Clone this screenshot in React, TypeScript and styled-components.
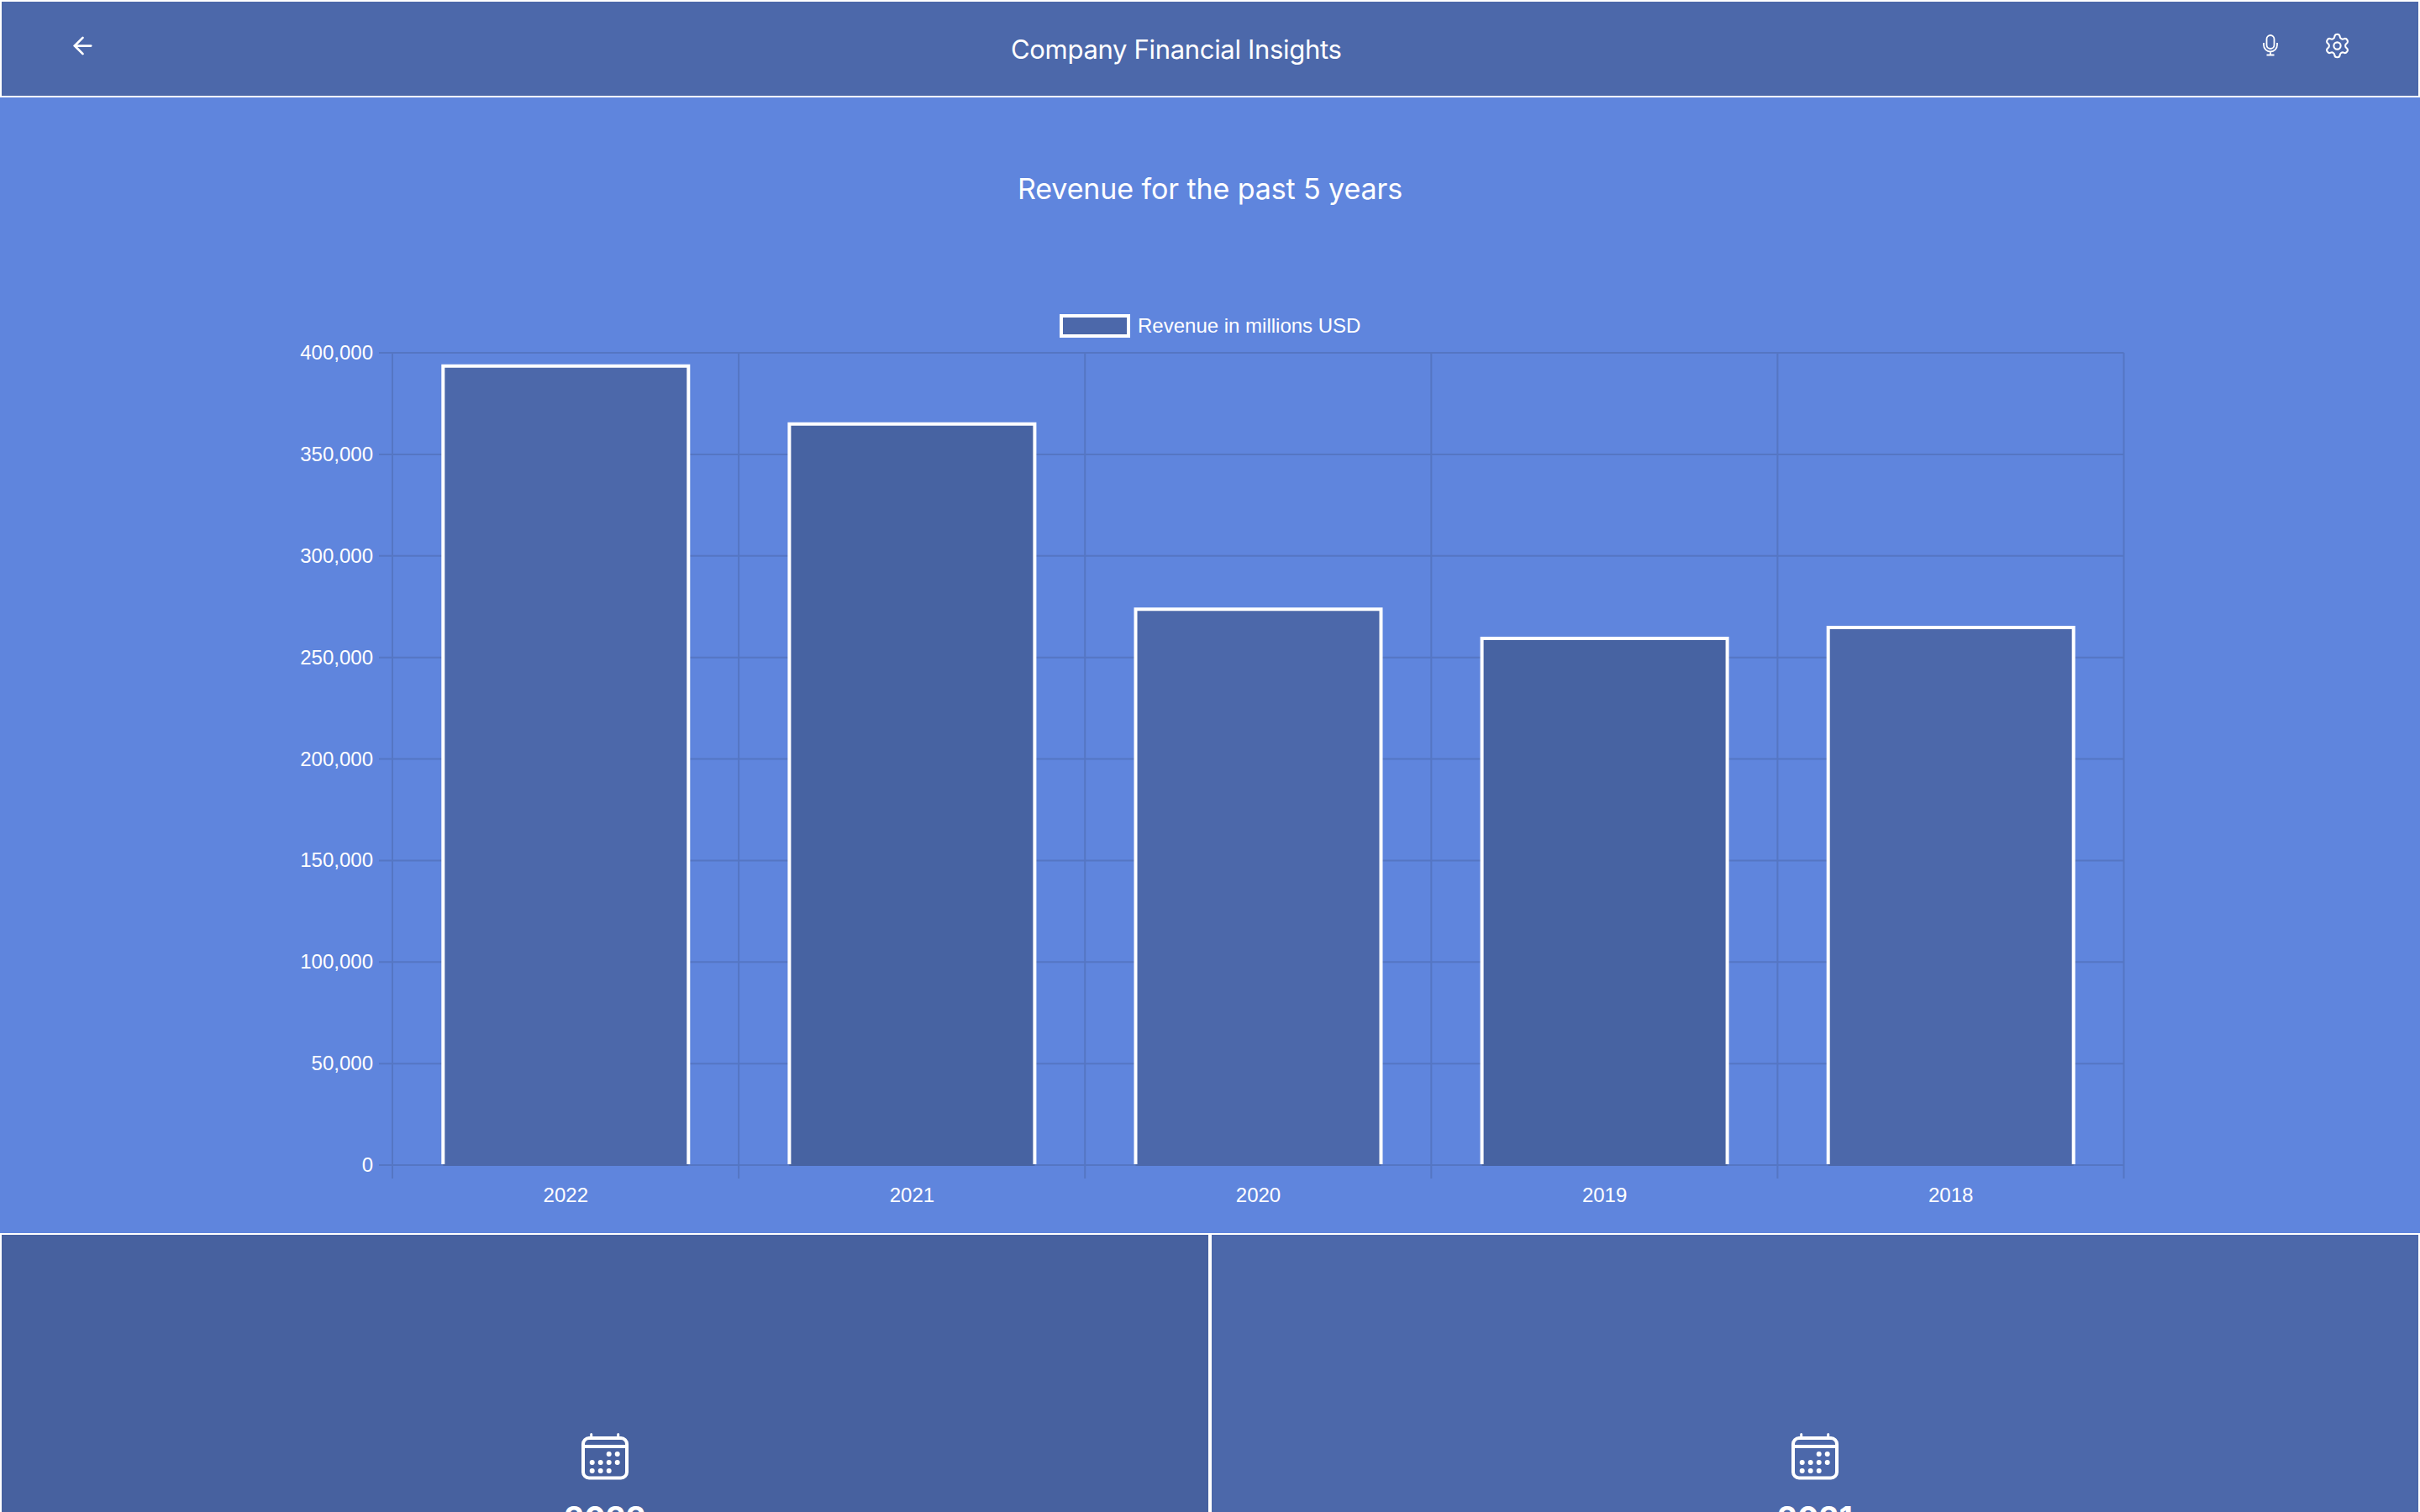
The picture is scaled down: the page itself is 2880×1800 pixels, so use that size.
import React from 'react';
import styled, {createGlobalStyle} from 'styled-components';
import {ArrowLeft, Settings} from 'lucide-react';

const GlobalStyle = createGlobalStyle`
  html, body {
    margin: 0;
    height: 100%;
    overflow: hidden;
    background: #5f85dd;
  }
  * {
    box-sizing: border-box;
  }
`;

const Page = styled.div`
  width: 2880px;
  height: 1800px;
  display: flex;
  flex-direction: column;
  background: #5f85dd;
  color: #fff;
  font-family: "Liberation Sans", Arial, sans-serif;
  overflow: hidden;
`;

const Header = styled.header`
  flex: 0 0 116px;
  display: grid;
  grid-template-columns: 1121px auto 1fr;
  align-items: center;
  border: 2px solid #fff;
  background: #4c68aa;
  padding: 0 80px 0 80px;
`;

const Title = styled.h1`
  margin: 0;
  font-family: Inter, "Liberation Sans", sans-serif;
  font-size: 31px;
  font-weight: 400;
  letter-spacing: -0.32px;
  line-height: 1;
`;

const HeaderIcons = styled.div`
  display: flex;
  justify-content: flex-end;
  align-items: center;
  gap: 54px;
  margin-top: -8px;
`;

const BackButton = styled.div`
  display: flex;
  margin-top: -8px;
`;

const Main = styled.main`
  flex: 0 0 1352px;
  display: flex;
  flex-direction: column;
  align-items: center;
`;

const ChartTitle = styled.h2`
  margin: 87px 0 0;
  font-family: Inter, "Liberation Sans", sans-serif;
  font-size: 34px;
  font-weight: 400;
  letter-spacing: -0.1px;
  line-height: 44px;
`;

const ChartSvg = styled.svg`
  display: block;
  margin-top: 113px;
`;

const AxisText = styled.text`
  fill: #fff;
  font-size: 24px;
  font-family: "Liberation Sans", Arial, sans-serif;
`;

const Cards = styled.section`
  flex: 1;
  display: grid;
  grid-template-columns: 1fr 1fr;
`;

const Card = styled.div<{$tone: string}>`
  display: flex;
  flex-direction: column;
  align-items: center;
  padding-top: 236px;
  border: 2px solid #fff;
  border-bottom: 0;
  background: ${p => p.$tone};
`;

const CardYear = styled.div`
  margin-top: 22px;
  font-family: Inter, "Liberation Sans", sans-serif;
  font-size: 38px;
  font-weight: 700;
  line-height: 46px;
`;

const CHART_W = 2880;
const PLOT_LEFT = 467;
const PLOT_TOP = 60;
const PLOT_BOTTOM = 1027;
const CELL = 412.1;
const GRID = '#5576c3';
const BAR_FILL = ['#4c68aa', '#4763a2', '#4c68aa', '#4763a2', '#4c68aa'];

const bars = [
  {year: '2022', value: 394328},
  {year: '2021', value: 365817},
  {year: '2020', value: 274515},
  {year: '2019', value: 260174},
  {year: '2018', value: 265595},
];

const ticks = [400000, 350000, 300000, 250000, 200000, 150000, 100000, 50000, 0];

const yFor = (v: number) => PLOT_BOTTOM - ((PLOT_BOTTOM - PLOT_TOP) * v) / 400000;

const MicIcon: React.FC = () => (
  <svg width="18" height="26" viewBox="0 0 18 26" fill="none" stroke="#fff" strokeWidth="1.8">
    <rect x="4.5" y="1" width="9" height="16" rx="4.5" />
    <path d="M1 10v2.5a8 8 0 0 0 16 0V10M9 20.5v4M4.5 24.5h9" />
  </svg>
);

const CalendarIcon: React.FC = () => (
  <svg width="56" height="56" viewBox="0 0 56 56" fill="none" stroke="#fff" strokeWidth="4">
    <rect x="2" y="6" width="52" height="47.5" rx="7" />
    <path d="M2 16h52" />
    <path d="M11.7 1.5V5M43.7 1.5V5" strokeWidth="3" strokeLinecap="round" />
    <g fill="#fff" stroke="none">
      <circle cx="32.7" cy="25" r="3" />
      <circle cx="42.7" cy="25" r="3" />
      <circle cx="12.7" cy="35" r="3" />
      <circle cx="22.7" cy="35" r="3" />
      <circle cx="32.7" cy="35" r="3" />
      <circle cx="42.7" cy="35" r="3" />
      <circle cx="12.7" cy="45" r="3" />
      <circle cx="22.7" cy="45" r="3" />
      <circle cx="32.7" cy="45" r="3" />
    </g>
  </svg>
);

const RevenueChart: React.FC = () => (
  <ChartSvg width={CHART_W} height={1090} viewBox={`0 0 ${CHART_W} 1090`}>
    <rect x="1263" y="16" width="80" height="24" fill="#4c68aa" stroke="#fff" strokeWidth="4" />
    <AxisText x={1354} y={36}>Revenue in millions USD</AxisText>
    {ticks.map(t => (
      <g key={t}>
        <line x1={451} x2={PLOT_LEFT + CELL * 5} y1={yFor(t)} y2={yFor(t)} stroke={GRID} strokeWidth="2" />
        <AxisText x={444} y={yFor(t) + 8} textAnchor="end">{t.toLocaleString('en-US')}</AxisText>
      </g>
    ))}
    {[0, 1, 2, 3, 4, 5].map(i => (
      <line
        key={i}
        x1={PLOT_LEFT + CELL * i}
        x2={PLOT_LEFT + CELL * i}
        y1={PLOT_TOP}
        y2={PLOT_BOTTOM + 16}
        stroke={GRID}
        strokeWidth="2"
      />
    ))}
    {bars.map((b, i) => {
      const x = PLOT_LEFT + CELL * i + 60.3;
      const y = yFor(b.value) + 2;
      return (
        <g key={b.year}>
          <rect x={x} y={y} width={292} height={PLOT_BOTTOM + 1 - y} fill={BAR_FILL[i]} />
          <path
            d={`M${x} ${PLOT_BOTTOM - 1}V${y}H${x + 292}V${PLOT_BOTTOM - 1}`}
            fill="none"
            stroke="#fff"
            strokeWidth="4"
          />
          <AxisText x={x + 146} y={PLOT_BOTTOM + 44} textAnchor="middle">{b.year}</AxisText>
        </g>
      );
    })}
  </ChartSvg>
);

const App: React.FC = () => (
  <Page>
    <GlobalStyle />
    <Header>
      <BackButton><ArrowLeft size={33} color="#fff" strokeWidth={2} /></BackButton>
      <Title>Company Financial Insights</Title>
      <HeaderIcons>
        <MicIcon />
        <Settings size={33} color="#fff" strokeWidth={1.5} />
      </HeaderIcons>
    </Header>
    <Main>
      <ChartTitle>Revenue for the past 5 years</ChartTitle>
      <RevenueChart />
    </Main>
    <Cards>
      <Card $tone="#47619f">
        <CalendarIcon />
        <CardYear>2022</CardYear>
      </Card>
      <Card $tone="#4c68aa">
        <CalendarIcon />
        <CardYear>2021</CardYear>
      </Card>
    </Cards>
  </Page>
);

export default App;
